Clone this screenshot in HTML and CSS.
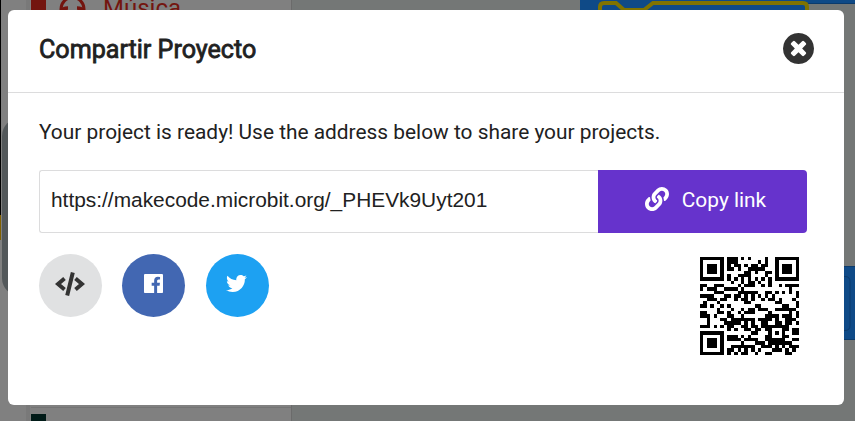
FILE: index.html
```html
<!DOCTYPE html>
<html lang="es">
<head>
<meta charset="utf-8">
<title>Compartir Proyecto</title>
<link rel="stylesheet" href="styles.css">
</head>
<body>
<svg class="editor" width="855" height="421" aria-hidden="true">
  <rect width="855" height="421" fill="#808080"/>
  <rect x="0" width="1" height="215" fill="#000"/>
  <rect x="0" y="215" width="1" height="25" fill="#806000"/>
  <rect x="2" y="118" width="40" height="178" rx="18" fill="#53585a"/>
  <rect x="26" width="4" height="421" fill="#797979"/>
  <rect x="31" width="15" height="40" fill="#73150f"/>
  <path d="M61 14V9a11 11 0 0 1 23 0v5" fill="none" stroke="#73150f" stroke-width="3"/>
  <path d="M62 11q1-3 6-3M83 11q-1-3-6-3" fill="none" stroke="#73150f" stroke-width="3.500"/>
  <text class="category" x="103" y="16">Música</text>
  <rect x="31" y="407" width="260" height="1" fill="#747474"/>
  <rect x="31" y="414" width="15" height="7" fill="#001a17"/>
  <rect x="292" width="563" height="421" fill="#747776"/>
  <rect x="291" width="1" height="421" fill="#6b6b6b"/>
  <path d="M580 0h275v3h-275z" fill="#0f4a87"/>
  <path d="M580 0h227v30h-227z" fill="#0f4a87"/>
  <path d="M807 3.500h48" stroke="#0c3b6c"/>
  <path d="M600 14V7q0-4 4-4h12l8 7h20l9-7h150q4 0 4 4v7" fill="none" stroke="#807300" stroke-width="4"/>
  <path d="M830 266h25v74h-25z" fill="#0f4a87"/>
  <path d="M830 266.500h25M830 339.500h25M840 276.500h5q5 0 5 5v44q0 5-5 5h-5" fill="none" stroke="#0c3b6c"/>
</svg>
<main class="modal">
  <header class="header">
    <h1 class="title">Compartir Proyecto</h1>
    <button class="close" aria-label="Close"><svg viewBox="128 128 1536 1536"><path d="M1277 1122q0-26-19-45l-181-181 181-181q19-19 19-45 0-27-19-46l-90-90q-19-19-46-19-26 0-45 19l-181 181-181-181q-19-19-45-19-27 0-46 19l-90 90q-19 19-19 46 0 26 19 45l181 181-181 181q-19 19-19 45 0 27 19 46l90 90q19 19 46 19 26 0 45-19l181-181 181 181q19 19 45 19 27 0 46-19l90-90q19-19 19-46zm387-226q0 209-103 385.500t-279.500 279.500-385.500 103-385.500-103-279.500-279.500-103-385.500 103-385.500 279.500-279.500 385.500-103 385.500 103 279.500 279.500 103 385.500z"/></svg></button>
  </header>
  <section class="content">
    <p class="message">Your project is ready! Use the address below to share your projects.</p>
    <div class="address">
      <div class="url">https://makecode.microbit.org/_PHEVk9Uyt201</div>
      <button class="copy"><svg viewBox="0 0 512 512"><path d="M326.612 185.391c59.747 59.809 58.927 155.698.36 214.590-.11.12-.24.25-.36.37l-67.200 67.200c-59.270 59.270-155.699 59.262-214.960 0-59.270-59.260-59.270-155.700 0-214.960l37.106-37.106c9.840-9.840 26.786-3.300 27.294 10.606.648 17.722 3.826 35.527 9.690 52.721 1.986 5.822.567 12.262-3.783 16.612l-13.087 13.087c-28.026 28.026-28.905 73.660-1.155 101.960 28.024 28.579 74.086 28.749 102.325.51l67.200-67.190c28.191-28.191 28.073-73.757 0-101.830-3.701-3.694-7.429-6.564-10.341-8.569a16.037 16.037 0 0 1-6.947-12.606c-.396-10.567 3.348-21.456 11.698-29.806l21.054-21.055c5.521-5.521 14.182-6.199 20.584-1.731a152.482 152.482 0 0 1 20.522 17.197zM467.547 44.449c-59.261-59.262-155.690-59.270-214.960 0l-67.200 67.200c-.12.12-.25.25-.36.37-58.566 58.892-59.387 154.781.36 214.590a152.454 152.454 0 0 0 20.521 17.196c6.402 4.468 15.064 3.789 20.584-1.731l21.054-21.055c8.350-8.350 12.094-19.239 11.698-29.806a16.037 16.037 0 0 0-6.947-12.606c-2.912-2.005-6.640-4.875-10.341-8.569-28.073-28.073-28.191-73.639 0-101.830l67.200-67.190c28.239-28.239 74.300-28.069 102.325.51 27.750 28.300 26.872 73.934-1.155 101.960l-13.087 13.087c-4.350 4.350-5.769 10.790-3.783 16.612 5.864 17.194 9.042 34.999 9.690 52.721.509 13.906 17.454 20.446 27.294 10.606l37.106-37.106c59.271-59.259 59.271-155.699.001-214.959z"/></svg><span>Copy link</span></button>
    </div>
    <div class="actions">
      <button class="round embed" aria-label="Embed"><svg width="30" height="26" viewBox="0 0 30 26"><path d="M9.500 7.500 3 13l6.500 5.500M20.500 7.500 27 13l-6.500 5.500M17.800 1.500 12.200 24.500" fill="none" stroke="#333" stroke-width="4"/></svg></button>
      <button class="round facebook" aria-label="Facebook"><svg width="19" height="19" viewBox="0 128 1536 1536"><path d="M1451 128q35 0 60 25t25 60v1366q0 35-25 60t-60 25h-391v-595h199l30-232h-229v-148q0-56 23.500-84t91.500-28l122-1v-207q-63-9-178-9-136 0-217.500 80t-81.500 226v171h-200v232h200v595h-735q-35 0-60-25t-25-60v-1366q0-35 25-60t60-25z"/></svg></button>
      <button class="round twitter" aria-label="Twitter"><svg width="21" height="21" viewBox="0 0 512 512"><path d="M459.370 151.716c.325 4.548.325 9.097.325 13.645 0 138.720-105.583 298.558-298.558 298.558-59.452 0-114.680-17.219-161.137-47.106 8.447.974 16.568 1.299 25.340 1.299 49.055 0 94.213-16.568 130.274-44.832-46.132-.975-84.792-31.188-98.112-72.772 6.498.974 12.995 1.624 19.818 1.624 9.421 0 18.843-1.300 27.614-3.573-48.081-9.747-84.143-51.980-84.143-102.985v-1.299c13.969 7.797 30.214 12.670 47.431 13.319-28.264-18.843-46.781-51.005-46.781-87.391 0-19.492 5.197-37.360 14.294-52.954 51.655 63.675 129.300 105.258 216.365 109.807-1.624-7.797-2.599-15.918-2.599-24.040 0-57.828 46.782-104.934 104.934-104.934 30.213 0 57.502 12.670 76.670 33.137 23.715-4.548 46.456-13.320 66.599-25.340-7.798 24.366-24.366 44.833-46.132 57.827 21.117-2.273 41.584-8.122 60.426-16.243-14.292 20.791-32.161 39.308-52.628 54.253z"/></svg></button>
      <svg class="qr" width="99" height="98" viewBox="0 0 29 29" preserveAspectRatio="none" shape-rendering="crispEdges"><path id="qr"/></svg>
    </div>
  </section>
</main>
<script src="qr.js"></script>
</body>
</html>
```
FILE: styles.css
```css
* { box-sizing: border-box; }
body {
  margin: 0;
  width: 855px;
  height: 421px;
  overflow: hidden;
  font-family: Roboto, "Liberation Sans", sans-serif;
  font-size: 20.880px;
  color: #212121;
  padding: 10px 11px 16px 8px;
}
button { border: 0; padding: 0; margin: 0; font: inherit; background: none; }
svg { display: block; }
.editor { position: absolute; left: 0; top: 0; }
.category { font-size: 24px; fill: #73150f; }
.modal {
  position: relative;
  height: 395px;
  background: #fff;
  border-radius: 6px;
}
.header {
  height: 83px;
  padding: 0 30px 6px 31px;
  display: flex;
  align-items: center;
  justify-content: space-between;
  border-bottom: 1px solid #dcdcdd;
}
.title {
  margin: 0;
  padding-top: 3px;
  font-size: 25.100px;
  line-height: 32px;
  font-weight: 400;
  -webkit-text-stroke: .8px #212121;
}
.close svg { width: 31px; height: 31px; fill: #333; }
.content { padding: 24px 37px 0 31px; }
.message { margin: 0; line-height: 30px; }
.address { display: flex; height: 63px; margin-top: 23px; }
.url {
  flex: 1;
  border: 1px solid #dcdcdd;
  border-right: 0;
  border-radius: 3px 0 0 3px;
  padding-left: 11px;
  line-height: 58px;
  font-family: "Liberation Sans", sans-serif;
}
.copy {
  width: 209px;
  background: #6633cc;
  color: #fff;
  border-radius: 0 4px 4px 0;
  display: flex;
  align-items: center;
  justify-content: center;
  gap: 13px;
  padding: 0 0 3px 6px;
}
.copy svg { width: 24px; height: 24px; fill: #fff; margin-bottom: 2px; }
.actions { display: flex; gap: 20.400px; margin-top: 21px; }
.round {
  width: 63px;
  height: 63px;
  border-radius: 50%;
  display: flex;
  align-items: center;
  justify-content: center;
  padding: 0 1px 4px 0;
}
.embed { background: #e0e1e2; }
.facebook { background: #4267b2; fill: #fff; }
.twitter { background: #1da1f2; fill: #fff; }
.qr { margin: 3px 8px 0 auto; }
```
FILE: qr.js
```js
// QR code, version 3, error correction level L, mask pattern 4.
// The host part is stored upper-case in alphanumeric mode, the id in byte mode.
const url = document.querySelector('.url').textContent;
const cut = url.lastIndexOf('/') + 1;
const host = url.slice(0, cut).toUpperCase(), id = url.slice(cut);
const ALNUM = '0123456789ABCDEFGHIJKLMNOPQRSTUVWXYZ $%*+-./:';
const N = 29, DATA = 55, ECC = 15;
const bin = (n, w) => n.toString(2).padStart(w, '0');

let bits = '0010' + bin(host.length, 9);
for (let i = 0; i < host.length; i += 2) {
  const a = ALNUM.indexOf(host[i]);
  bits += i + 1 < host.length ? bin(a * 45 + ALNUM.indexOf(host[i + 1]), 11) : bin(a, 6);
}
bits += '0100' + bin(id.length, 8);
for (const c of id) bits += bin(c.charCodeAt(0), 8);
bits += '0000';
bits = bits.padEnd(Math.ceil(bits.length / 8) * 8, '0');
const data = bits.match(/.{8}/g).map(b => parseInt(b, 2));
for (let i = 0; data.length < DATA; i++) data.push(i % 2 ? 0x11 : 0xec);

function mul(a, b) {
  let r = 0;
  for (; b; b >>= 1) {
    if (b & 1) r ^= a;
    a = (a << 1) ^ (a & 128 ? 0x11d : 0);
  }
  return r;
}
let gen = [1], root = 1;
for (let i = 0; i < ECC; i++) {
  const next = [...gen, 0];
  gen.forEach((g, j) => { next[j + 1] ^= mul(g, root); });
  gen = next;
  root = mul(root, 2);
}
const rem = [...data, ...Array(ECC).fill(0)];
for (let i = 0; i < DATA; i++) {
  const f = rem[i];
  gen.forEach((g, j) => { rem[i + j] ^= mul(g, f); });
}
const stream = [...data, ...rem.slice(DATA)].map(b => bin(b, 8)).join('');

const grid = Array.from({ length: N }, () => Array(N).fill(null));
function finder(cx, cy) {
  for (let dy = -4; dy <= 4; dy++) for (let dx = -4; dx <= 4; dx++) {
    const x = cx + dx, y = cy + dy, d = Math.max(Math.abs(dx), Math.abs(dy));
    if (x >= 0 && y >= 0 && x < N && y < N) grid[y][x] = d !== 2 && d !== 4;
  }
}
for (let i = 0; i < N; i++) grid[6][i] = grid[i][6] = i % 2 === 0;
finder(3, 3); finder(N - 4, 3); finder(3, N - 4);
for (let dy = -2; dy <= 2; dy++) for (let dx = -2; dx <= 2; dx++)
  grid[22 + dy][22 + dx] = Math.max(Math.abs(dx), Math.abs(dy)) !== 1;

const format = '110011000101111';
for (let i = 0; i < 15; i++) {
  const on = format[i] === '1';
  if (i < 6) grid[8][i] = on;
  else if (i < 8) grid[8][i + 1] = on;
  else if (i === 8) grid[7][8] = on;
  else grid[14 - i][8] = on;
  if (i < 7) grid[N - 1 - i][8] = on;
  else grid[8][N - 15 + i] = on;
}
grid[N - 8][8] = true;

let k = 0, up = true;
for (let right = N - 1; right > 0; right -= 2) {
  if (right === 6) right = 5;
  for (let v = 0; v < N; v++) {
    const y = up ? N - 1 - v : v;
    for (const x of [right, right - 1]) {
      if (grid[y][x] !== null) continue;
      const invert = (Math.floor(y / 2) + Math.floor(x / 3)) % 2 === 0;
      grid[y][x] = (stream[k++] === '1') !== invert;
    }
  }
  up = !up;
}
let d = '';
grid.forEach((row, y) => row.forEach((on, x) => { if (on) d += `M${x} ${y}h1v1h-1z`; }));
document.getElementById('qr').setAttribute('d', d);
```
